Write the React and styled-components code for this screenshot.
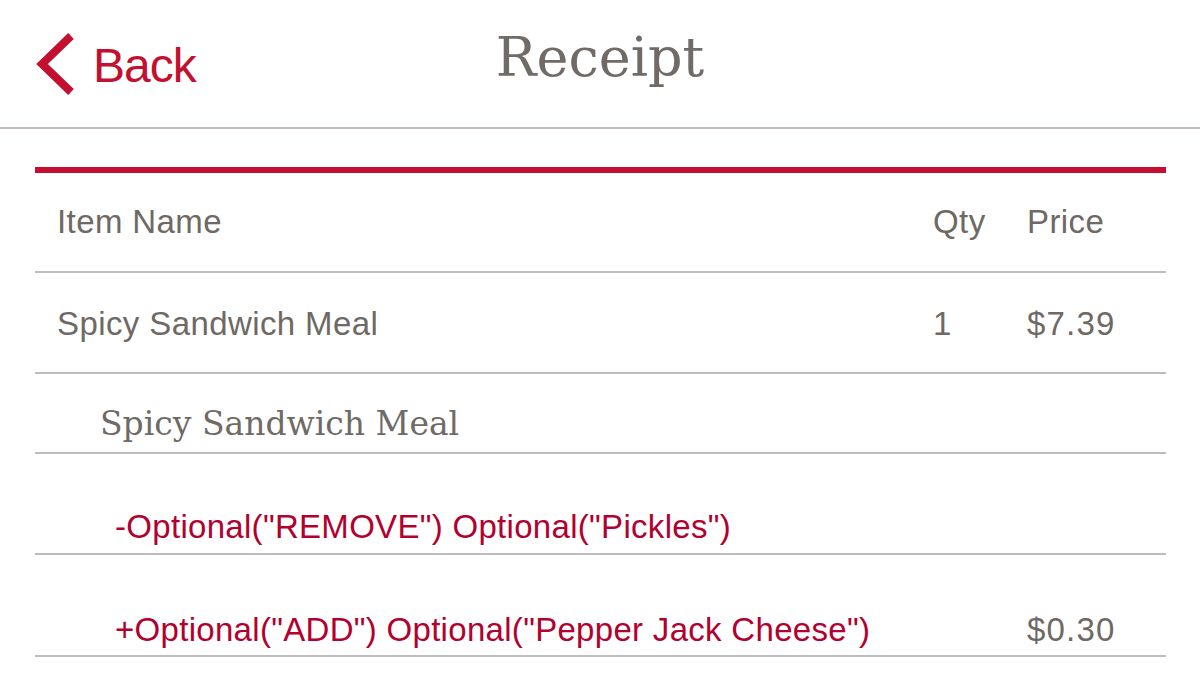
import React from "react";
import styled, { createGlobalStyle, css } from "styled-components";

const GlobalStyle = createGlobalStyle`
  html, body {
    margin: 0;
    padding: 0;
    background: #ffffff;
  }
  body {
    font-family: "Liberation Sans", Arial, sans-serif;
    overflow: hidden;
  }
`;

const Page = styled.main`
  width: 1200px;
  height: 675px;
  overflow: hidden;
  background: #fff;
`;

const Header = styled.header`
  display: grid;
  grid-template-columns: 1fr auto 1fr;
  align-items: start;
  height: 127px;
  padding: 0 36px;
  border-bottom: 2px solid #c4babd;
`;

const BackButton = styled.button`
  display: flex;
  align-items: center;
  gap: 17px;
  justify-self: start;
  margin-top: 33px;
  padding: 0;
  border: 0;
  background: transparent;
  color: #c3102f;
  cursor: pointer;
`;

const BackLabel = styled.span`
  font-family: "Liberation Sans", Arial, sans-serif;
  font-size: 48px;
  line-height: 56px;
  letter-spacing: -1px;
  margin-top: 4px;
`;

const Title = styled.h1`
  margin: 26px 0 0;
  font-family: "DejaVu Serif", "Liberation Serif", serif;
  font-weight: normal;
  font-size: 54px;
  line-height: 64px;
  color: #706b67;
`;

const Table = styled.section`
  margin: 38px 34px 0 35px;
  border-top: 6px solid #c50f31;
`;

const Row = styled.div`
  display: grid;
  grid-template-columns: 898px 93px 1fr;
  padding: ${(p) => p.$pt}px 0 ${(p) => p.$pb}px;
  border-bottom: 2px solid #bdbdbd;
  font-size: 33px;
  line-height: 38px;
  letter-spacing: 0.4px;
  color: #6e6964;
`;

const NameCell = styled.div`
  padding-left: ${(p) => p.$indent || 22}px;
  white-space: nowrap;

  ${(p) =>
    p.$serif &&
    css`
      font-family: "DejaVu Serif", "Liberation Serif", serif;
      letter-spacing: 0;
      color: #6f6a66;
    `};

  ${(p) =>
    p.$accent &&
    css`
      color: #b2002f;
      letter-spacing: 0.3px;
    `};
`;

const QtyCell = styled.div``;

const PriceCell = styled.div`
  padding-left: 1px;

  ${(p) =>
    p.$amount &&
    css`
      letter-spacing: 1.2px;
    `};
`;

function Chevron() {
  return (
    <svg width="40" height="62" viewBox="0 0 40 62" aria-hidden="true">
      <polyline
        points="35,3 6,31 35,59"
        fill="none"
        stroke="currentColor"
        strokeWidth="8"
        strokeLinejoin="miter"
      />
    </svg>
  );
}

export default function App() {
  return (
    <Page>
      <GlobalStyle />
      <Header>
        <BackButton>
          <Chevron />
          <BackLabel>Back</BackLabel>
        </BackButton>
        <Title>Receipt</Title>
        <div />
      </Header>
      <Table>
        <Row $pt={30} $pb={30}>
          <NameCell>Item Name</NameCell>
          <QtyCell>Qty</QtyCell>
          <PriceCell>Price</PriceCell>
        </Row>
        <Row $pt={32} $pb={29}>
          <NameCell>Spicy Sandwich Meal</NameCell>
          <QtyCell>1</QtyCell>
          <PriceCell $amount>$7.39</PriceCell>
        </Row>
        <Row $pt={31} $pb={9}>
          <NameCell $serif $indent={65}>
            Spicy Sandwich Meal
          </NameCell>
          <QtyCell />
          <PriceCell />
        </Row>
        <Row $pt={54} $pb={7}>
          <NameCell $accent $indent={80}>
            -Optional("REMOVE") Optional("Pickles")
          </NameCell>
          <QtyCell />
          <PriceCell />
        </Row>
        <Row $pt={56} $pb={6}>
          <NameCell $accent $indent={80}>
            +Optional("ADD") Optional("Pepper Jack Cheese")
          </NameCell>
          <QtyCell />
          <PriceCell $amount>$0.30</PriceCell>
        </Row>
      </Table>
    </Page>
  );
}
